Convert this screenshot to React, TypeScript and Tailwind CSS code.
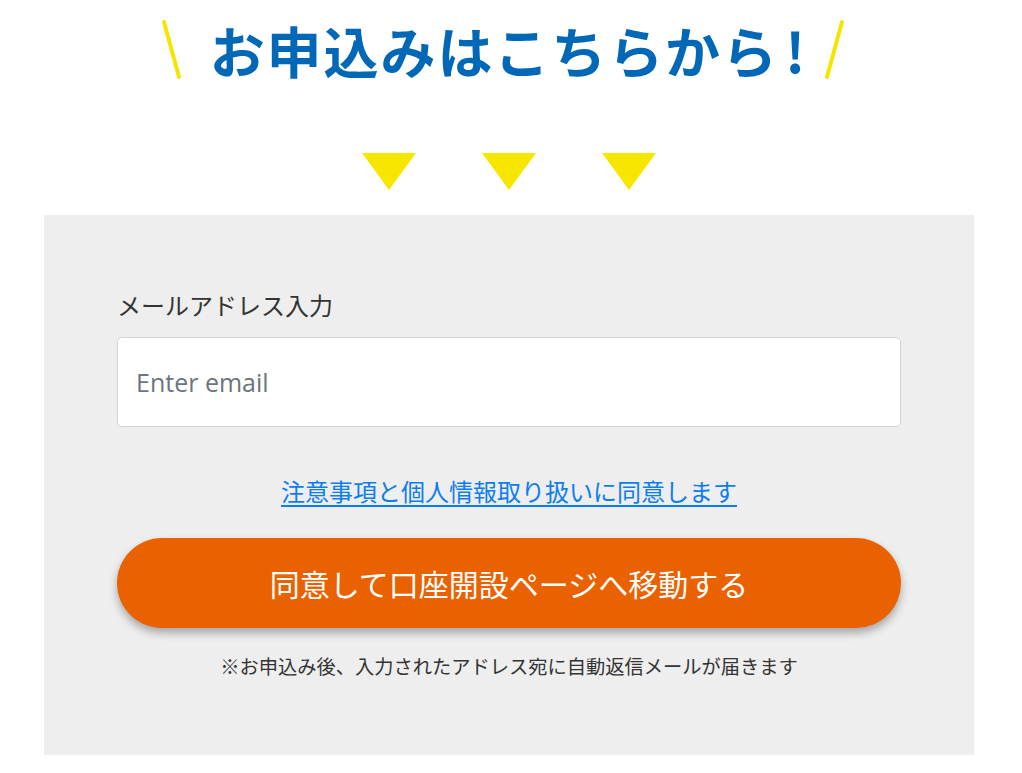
export default function App() {
  const jp = { fontFamily: '"Noto Sans CJK JP", "Noto Sans", sans-serif' };

  return (
    <div className="min-h-[773px] w-[1022px] bg-white" style={jp}>
      {/* heading */}
      <div className="flex h-[98px] items-center justify-center pr-[16px]">
        <svg width="22" height="62" viewBox="0 0 22 62" className="mt-[2px]">
          <line x1="3" y1="3" x2="18" y2="58" stroke="#f5e600" strokeWidth="4" strokeLinecap="round" />
        </svg>
        <h1 className="ml-[27px] mr-[18px] flex items-baseline text-[55px] font-bold leading-none tracking-[0.035em] text-[#0068b7]">
          <span>お申込みはこちらから</span>
          <span className="ml-[6px] tracking-normal">!</span>
        </h1>
        <svg width="22" height="62" viewBox="0 0 22 62" className="mt-[2px]">
          <line x1="19" y1="3" x2="4" y2="58" stroke="#f5e600" strokeWidth="4" strokeLinecap="round" />
        </svg>
      </div>

      {/* arrows */}
      <div className="flex justify-center gap-[66px] pt-[55px] pb-[25px] pr-[4px]">
        {[0, 1, 2].map((i) => (
          <svg key={i} width="54" height="37" viewBox="0 0 54 37">
            <polygon points="0,0 54,0 27,37" fill="#f6e600" />
          </svg>
        ))}
      </div>

      {/* form panel */}
      <div className="ml-[44px] w-[930px] bg-[#eeeeee] px-[73px] pt-[74px] pb-[75px]">
        <label className="block text-[24px] leading-[32px] text-[#333333]">
          メールアドレス入力
        </label>
        <input
          type="email"
          placeholder="Enter email"
          className="mt-[16px] block h-[90px] w-full rounded-[5px] border border-[#d4d4d8] bg-white px-[18px] text-[25px] text-[#333] placeholder:text-[#6c757d] outline-none"
          style={{ fontFamily: '"Open Sans", "Noto Sans", sans-serif' }}
        />

        <div className="mt-[48px] text-center">
          <a
            href="#"
            className="text-[24px] leading-[32px] text-[#0d7df2] underline underline-offset-[4px]"
          >
            注意事項と個人情報取り扱いに同意します
          </a>
        </div>

        <button
          type="button"
          className="mt-[31px] flex h-[90px] w-full items-center justify-center rounded-full bg-[#ea6100] text-[30px] text-white shadow-[0_5px_8px_rgba(0,0,0,0.3)]"
        >
          同意して口座開設ページへ移動する
        </button>

        <p className="mt-[24px] text-center text-[19.25px] leading-[28px] text-[#333333]">
          ※お申込み後、入力されたアドレス宛に自動返信メールが届きます
        </p>
      </div>
    </div>
  );
}
